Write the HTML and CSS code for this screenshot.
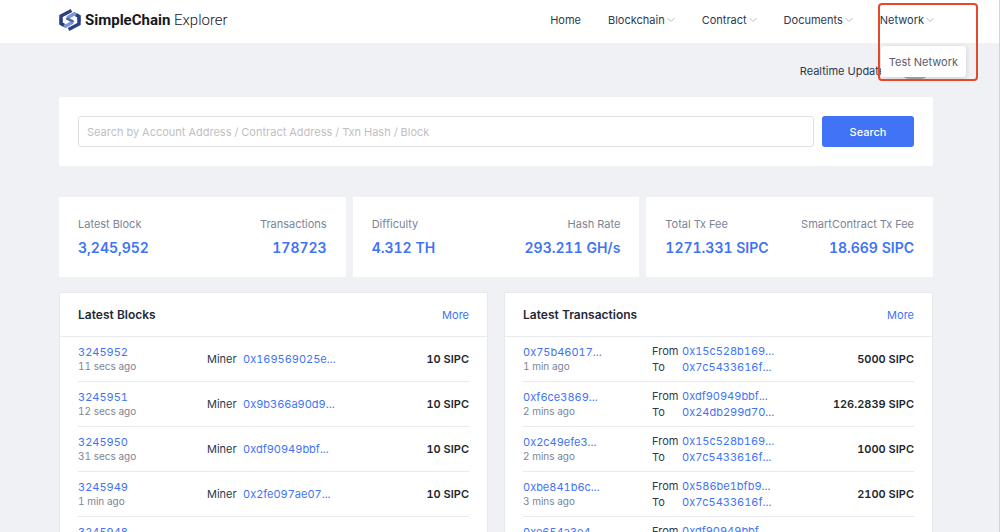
FILE: index.html
```html
<!DOCTYPE html>
<html lang="en">
<head>
  <meta charset="UTF-8">
  <meta name="viewport" content="width=device-width, initial-scale=1">
  <title>SimpleChain Explorer</title>
  <link rel="stylesheet" href="styles.css">
</head>
<body>
  <header class="header">
    <a class="logo" href="#">
      <svg class="logo-mark" viewBox="0 0 22 22" aria-hidden="true">
        <g fill="none" stroke-width="3.4">
          <path stroke="#7c99c9" d="M20 12 V7.4 L15.5 4.8 L8.4 8.8"/>
          <path stroke="#7c99c9" d="M2 10 V14.6 L6.5 17.2 L13.6 13.2"/>
          <path stroke="#2b3f86" d="M12.5 1.6 L2 7 V14.6 L5 16.3"/>
          <path stroke="#2b3f86" d="M9.5 20.4 L20 15 V7.4 L17 5.7"/>
          <path stroke="#4a66a8" stroke-width="2.6" d="M8.4 8.4 V9.6 L13.6 12.4 V13.6"/>
        </g>
      </svg>
      <span class="logo-text"><b>SimpleChain</b> Explorer</span>
    </a>
    <nav class="nav">
      <a href="#">Home</a>
      <a href="#">Blockchain <svg class="arrow" viewBox="0 0 8 6"><path d="M0.5 1 L4 4.5 L7.5 1"/></svg></a>
      <a href="#">Contract <svg class="arrow" viewBox="0 0 8 6"><path d="M0.5 1 L4 4.5 L7.5 1"/></svg></a>
      <a href="#">Documents <svg class="arrow" viewBox="0 0 8 6"><path d="M0.5 1 L4 4.5 L7.5 1"/></svg></a>
      <div class="nav-open">
        <a href="#">Network <svg class="arrow" viewBox="0 0 8 6"><path d="M0.5 1 L4 4.5 L7.5 1"/></svg></a>
        <div class="dropdown"><a href="#">Test Network</a></div>
        <div class="highlight"></div>
      </div>
    </nav>
  </header>

  <main class="main">
    <div class="realtime">
      <label for="realtime">Realtime Updates</label>
      <input class="switch" type="checkbox" id="realtime">
    </div>

    <form class="search">
      <input class="search-input" type="text" aria-label="Search" placeholder="Search by Account Address / Contract Address / Txn Hash / Block">
      <button class="search-button" type="button">Search</button>
    </form>

    <section class="stats">
      <div class="stat-card">
        <div class="stat"><span>Latest Block</span><strong>3,245,952</strong></div>
        <div class="stat right"><span>Transactions</span><strong>178723</strong></div>
      </div>
      <div class="stat-card">
        <div class="stat"><span>Difficulty</span><strong>4.312 TH</strong></div>
        <div class="stat right"><span>Hash Rate</span><strong>293.211 GH/s</strong></div>
      </div>
      <div class="stat-card">
        <div class="stat"><span>Total Tx Fee</span><strong>1271.331 SIPC</strong></div>
        <div class="stat right"><span>SmartContract Tx Fee</span><strong>18.669 SIPC</strong></div>
      </div>
    </section>

    <div class="panels">
      <section class="panel">
        <div class="panel-head">
          <h2>Latest Blocks</h2>
          <a href="#">More</a>
        </div>
        <table class="list">
          <tr>
            <td class="id"><a href="#">3245952</a><small>11 secs ago</small></td>
            <td><div class="miner"><span>Miner</span><a href="#">0x169569025e...</a></div></td>
            <td class="amount">10 SIPC</td>
          </tr>
          <tr>
            <td class="id"><a href="#">3245951</a><small>12 secs ago</small></td>
            <td><div class="miner"><span>Miner</span><a href="#">0x9b366a90d9...</a></div></td>
            <td class="amount">10 SIPC</td>
          </tr>
          <tr>
            <td class="id"><a href="#">3245950</a><small>31 secs ago</small></td>
            <td><div class="miner"><span>Miner</span><a href="#">0xdf90949bbf...</a></div></td>
            <td class="amount">10 SIPC</td>
          </tr>
          <tr>
            <td class="id"><a href="#">3245949</a><small>1 min ago</small></td>
            <td><div class="miner"><span>Miner</span><a href="#">0x2fe097ae07...</a></div></td>
            <td class="amount">10 SIPC</td>
          </tr>
          <tr>
            <td class="id"><a href="#">3245948</a><small>1 min ago</small></td>
            <td><div class="miner"><span>Miner</span><a href="#">0xdf90949bbf...</a></div></td>
            <td class="amount">10 SIPC</td>
          </tr>
        </table>
      </section>

      <section class="panel">
        <div class="panel-head">
          <h2>Latest Transactions</h2>
          <a href="#">More</a>
        </div>
        <table class="list">
          <tr>
            <td class="id"><a href="#">0x75b46017...</a><small>1 min ago</small></td>
            <td><div class="transfer"><span>From</span><a href="#">0x15c528b169...</a><span>To</span><a href="#">0x7c5433616f...</a></div></td>
            <td class="amount">5000 SIPC</td>
          </tr>
          <tr>
            <td class="id"><a href="#">0xf6ce3869...</a><small>2 mins ago</small></td>
            <td><div class="transfer"><span>From</span><a href="#">0xdf90949bbf...</a><span>To</span><a href="#">0x24db299d70...</a></div></td>
            <td class="amount">126.2839 SIPC</td>
          </tr>
          <tr>
            <td class="id"><a href="#">0x2c49efe3...</a><small>2 mins ago</small></td>
            <td><div class="transfer"><span>From</span><a href="#">0x15c528b169...</a><span>To</span><a href="#">0x7c5433616f...</a></div></td>
            <td class="amount">1000 SIPC</td>
          </tr>
          <tr>
            <td class="id"><a href="#">0xbe841b6c...</a><small>3 mins ago</small></td>
            <td><div class="transfer"><span>From</span><a href="#">0x586be1bfb9...</a><span>To</span><a href="#">0x7c5433616f...</a></div></td>
            <td class="amount">2100 SIPC</td>
          </tr>
          <tr>
            <td class="id"><a href="#">0xe654a3e4...</a><small>3 mins ago</small></td>
            <td><div class="transfer"><span>From</span><a href="#">0xdf90949bbf...</a><span>To</span><a href="#">0x7c5433616f...</a></div></td>
            <td class="amount">1000 SIPC</td>
          </tr>
        </table>
      </section>
    </div>
  </main>
</body>
</html>
```

FILE: styles.css
```css
* {
  box-sizing: border-box;
}

body {
  margin: 0;
  font-family: Inter, "Liberation Sans", sans-serif;
  font-size: 11px;
  font-variant-numeric: tabular-nums;
  line-height: 16px;
  color: #2c3a4d;
  background: #f0f1f5;
  border-right: 1px solid #d3d4d9;
}

a {
  color: #3f73f6;
  text-decoration: none;
}

.header {
  display: flex;
  justify-content: space-between;
  align-items: center;
  height: 43px;
  padding: 0 65px 3px 59px;
  background: #fff;
}

.logo {
  display: flex;
  align-items: center;
  gap: 4px;
  color: #16181d;
}

.logo-mark {
  width: 22px;
  height: 22px;
}

.logo-text {
  font-family: Roboto, sans-serif;
  font-size: 15px;
  font-weight: 300;
}

.logo-text b {
  font-weight: 700;
}

.nav {
  display: flex;
  gap: 27px;
}

.nav a {
  display: flex;
  align-items: center;
  gap: 2px;
  color: #2c3a4d;
}

.arrow {
  width: 8px;
  height: 6px;
  fill: none;
  stroke: #b9bcc3;
}

.nav-open {
  position: relative;
}

.dropdown {
  position: absolute;
  top: 34px;
  left: 1px;
  z-index: 1;
  padding: 8px 8px 7px;
  background: #fff;
  border-radius: 3px;
  box-shadow: 0 1px 5px rgba(0, 0, 0, 0.15);
  white-space: nowrap;
}

.nav .dropdown a {
  color: #5a5e66;
}

/* frame around the open menu */
.highlight {
  position: absolute;
  top: -9px;
  left: -2px;
  z-index: 2;
  width: 100px;
  height: 78px;
  border: 2px solid #e5492b;
  border-radius: 4px;
  pointer-events: none;
}

.main {
  padding: 20px 66px 20px 59px;
}

.realtime {
  display: flex;
  justify-content: flex-end;
  align-items: center;
  gap: 10px;
  height: 16px;
  padding-right: 4px;
}

.switch {
  appearance: none;
  width: 28px;
  height: 16px;
  margin: 0;
  border-radius: 8px;
  background: #a9abb0;
}

.search {
  display: flex;
  gap: 8px;
  margin-top: 18px;
  padding: 19px;
  background: #fff;
  border-radius: 2px;
}

.search-input,
.search-button {
  height: 31px;
  font: inherit;
  border-radius: 3px;
}

.search-input {
  flex: 1;
  padding: 0 8px;
  border: 1px solid #e0e1e4;
}

.search-input::placeholder {
  color: #bfbfbf;
}

.search-button {
  width: 92px;
  border: 0;
  color: #fff;
  font-weight: 500;
  background: #4073f6;
}

.stats {
  display: flex;
  gap: 7px;
  margin-top: 31px;
}

.stat-card {
  flex: 1;
  display: flex;
  justify-content: space-between;
  padding: 19px 19px 17px;
  background: #fff;
}

.stat {
  display: flex;
  flex-direction: column;
  gap: 4px;
}

.stat.right {
  text-align: right;
}

.stat span {
  color: #7c8494;
}

.stat strong {
  font-size: 14px;
  line-height: 24px;
  font-weight: 600;
  color: #3f73f6;
}

.panels {
  display: flex;
  gap: 16px;
  margin-top: 15px;
}

.panel {
  flex: 1;
  background: #fff;
  border: 1px solid #e8e9ec;
}

.panel-head {
  display: flex;
  justify-content: space-between;
  align-items: center;
  height: 44px;
  padding: 0 18px;
  border-bottom: 1px solid #e9eaed;
}

.panel-head h2 {
  margin: 0;
  font-size: 12px;
  font-weight: 600;
  color: #1f2a38;
}

.list {
  width: 100%;
  padding: 0 18px;
  border-spacing: 0;
  table-layout: fixed;
}

.list td {
  height: 45px;
  padding: 0;
  border-bottom: 1px solid #e9eaed;
}

.list .id {
  width: 33%;
}

.id a,
.id small {
  display: block;
  line-height: 14px;
}

.id small {
  font-size: 10px;
  color: #7c8494;
}

.miner,
.transfer {
  display: grid;
  white-space: nowrap;
}

.miner {
  grid-template-columns: 36px auto;
}

.transfer {
  grid-template-columns: 30px auto;
}

.list .amount {
  width: 28%;
  font-weight: 600;
  text-align: right;
  color: #22262d;
}
```
